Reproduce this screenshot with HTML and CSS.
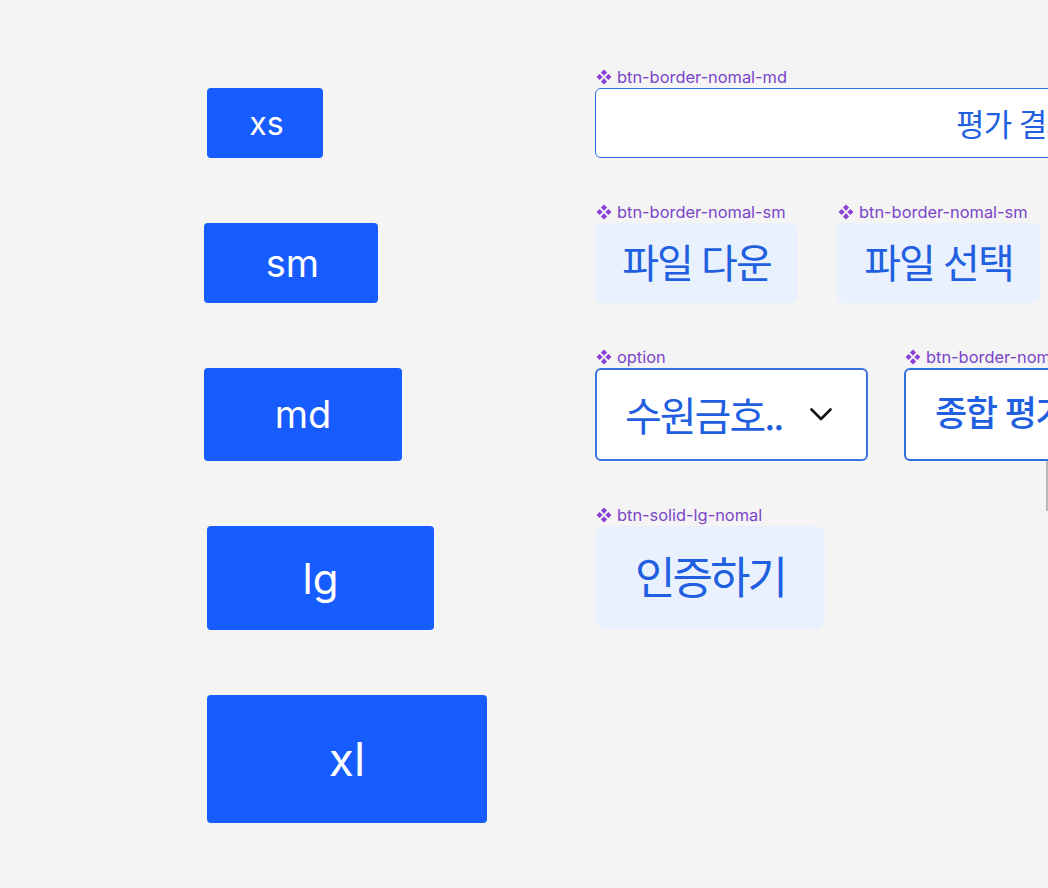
FILE: index.html
```html
<!DOCTYPE html>
<html lang="ko">
<head>
<meta charset="utf-8">
<link rel="stylesheet" href="styles.css">
</head>
<body>
<div class="canvas">
  <div class="board">
    <!-- row 1 -->
    <div class="cell-left"><div class="btn-solid size-xs shift">xs</div></div>
    <div class="cell-right">
      <div class="row">
        <div class="item">
          <div class="label"><svg class="comp" viewBox="0 0 12 12"><path d="M6 .4 8.3 2.7 6 5 3.7 2.7Z M2.7 3.7 5 6 2.7 8.3 .4 6Z M9.3 3.7 11.6 6 9.3 8.3 7 6Z M6 7 8.3 9.3 6 11.6 3.7 9.3Z"/></svg>btn-border-nomal-md</div>
          <div class="btn-border wide-md">평가 결과</div>
        </div>
      </div>
    </div>
    <!-- row 2 -->
    <div class="cell-left"><div class="btn-solid size-sm">sm</div></div>
    <div class="cell-right">
      <div class="row gap-sm">
        <div class="item">
          <div class="label"><svg class="comp" viewBox="0 0 12 12"><path d="M6 .4 8.3 2.7 6 5 3.7 2.7Z M2.7 3.7 5 6 2.7 8.3 .4 6Z M9.3 3.7 11.6 6 9.3 8.3 7 6Z M6 7 8.3 9.3 6 11.6 3.7 9.3Z"/></svg>btn-border-nomal-sm</div>
          <div class="btn-soft soft-sm">파일 다운</div>
        </div>
        <div class="item">
          <div class="label"><svg class="comp" viewBox="0 0 12 12"><path d="M6 .4 8.3 2.7 6 5 3.7 2.7Z M2.7 3.7 5 6 2.7 8.3 .4 6Z M9.3 3.7 11.6 6 9.3 8.3 7 6Z M6 7 8.3 9.3 6 11.6 3.7 9.3Z"/></svg>btn-border-nomal-sm</div>
          <div class="btn-soft soft-sm">파일 선택</div>
        </div>
      </div>
    </div>
    <!-- row 3 -->
    <div class="cell-left"><div class="btn-solid size-md">md</div></div>
    <div class="cell-right">
      <div class="row gap-md">
        <div class="item">
          <div class="label"><svg class="comp" viewBox="0 0 12 12"><path d="M6 .4 8.3 2.7 6 5 3.7 2.7Z M2.7 3.7 5 6 2.7 8.3 .4 6Z M9.3 3.7 11.6 6 9.3 8.3 7 6Z M6 7 8.3 9.3 6 11.6 3.7 9.3Z"/></svg>option</div>
          <div class="select">
            <span class="select-text">수원금호..</span>
            <svg class="chev" viewBox="0 0 22 13"><polyline points="1.5,1.5 11,11 20.5,1.5"/></svg>
          </div>
        </div>
        <div class="item">
          <div class="label"><svg class="comp" viewBox="0 0 12 12"><path d="M6 .4 8.3 2.7 6 5 3.7 2.7Z M2.7 3.7 5 6 2.7 8.3 .4 6Z M9.3 3.7 11.6 6 9.3 8.3 7 6Z M6 7 8.3 9.3 6 11.6 3.7 9.3Z"/></svg>btn-border-nomal-md</div>
          <div class="btn-border box-md">종합 평가 결과</div>
          <div class="guide"></div>
        </div>
      </div>
    </div>
    <!-- row 4 -->
    <div class="cell-left"><div class="btn-solid size-lg shift">lg</div></div>
    <div class="cell-right">
      <div class="row">
        <div class="item">
          <div class="label"><svg class="comp" viewBox="0 0 12 12"><path d="M6 .4 8.3 2.7 6 5 3.7 2.7Z M2.7 3.7 5 6 2.7 8.3 .4 6Z M9.3 3.7 11.6 6 9.3 8.3 7 6Z M6 7 8.3 9.3 6 11.6 3.7 9.3Z"/></svg>btn-solid-lg-nomal</div>
          <div class="btn-soft soft-lg">인증하기</div>
        </div>
      </div>
    </div>
    <!-- row 5 -->
    <div class="cell-left"><div class="btn-solid size-xl shift">xl</div></div>
    <div class="cell-right"></div>
  </div>
</div>
</body>
</html>
```

FILE: styles.css
```css
html, body {
  margin: 0;
  padding: 0;
  background: #f4f4f4;
  overflow: hidden;
  width: 1048px;
  height: 888px;
}

.canvas {
  padding: 67px 0 0 204px;
  font-family: Inter, "Noto Sans CJK KR", sans-serif;
}

.board {
  display: grid;
  grid-template-columns: 391px auto;
  row-gap: 44px;
  align-items: start;
}

.cell-left {
  padding-top: 21px;
}

.cell-right {
  min-width: 0;
}

.row {
  display: flex;
  align-items: flex-start;
}

.gap-sm { gap: 39px; }
.gap-md { gap: 36px; }

.item {
  display: flex;
  flex-direction: column;
  flex: none;
  position: relative;
}

.label {
  height: 21px;
  display: flex;
  align-items: center;
  gap: 5px;
  padding-left: 1px;
  font-family: Inter, sans-serif;
  font-size: 16.4px;
  color: #7a44c9;
  white-space: nowrap;
  line-height: 1;
  padding-bottom: 1px;
  box-sizing: border-box;
}

.comp {
  width: 16px;
  height: 16px;
  fill: #8a3fd6;
  flex: none;
}

/* solid blue buttons */
.btn-solid {
  background: #175cff;
  color: #ffffff;
  border-radius: 4px;
  display: flex;
  align-items: center;
  justify-content: center;
  font-family: Inter, sans-serif;
  box-sizing: border-box;
}

.shift { margin-left: 3px; }

.size-xs { width: 116px; height: 70px; font-size: 32px; padding-left: 3px; }
.size-sm { width: 174px; height: 80px; font-size: 38px; padding-left: 3px; }
.size-md { width: 198px; height: 93px; font-size: 38px; padding-bottom: 2px; }
.size-lg { width: 227px; height: 104px; font-size: 42px; }
.size-xl { width: 280px; height: 128px; font-size: 46px; }

/* border buttons */
.btn-border {
  background: #ffffff;
  border: 1.5px solid #2f6de0;
  border-radius: 6px;
  box-sizing: border-box;
  display: flex;
  align-items: center;
  color: #1f5fe0;
  font-family: "Noto Sans CJK KR", sans-serif;
  white-space: nowrap;
}

.wide-md {
  width: 840px;
  height: 70px;
  justify-content: center;
  font-size: 31px;
  letter-spacing: -1px;
  padding-bottom: 2px;
}

.box-md {
  width: 300px;
  height: 93px;
  padding-left: 29px;
  font-size: 35px;
  font-weight: 500;
  letter-spacing: -1.5px;
  border-width: 2px;
  padding-bottom: 8px;
}

.guide {
  position: absolute;
  left: 142px;
  top: 114px;
  width: 2px;
  height: 50px;
  background: #b8b8b8;
}

/* soft blue buttons */
.btn-soft {
  background: #e8f1fd;
  color: #1f5fe0;
  border-radius: 7px;
  display: flex;
  align-items: center;
  justify-content: center;
  font-family: "Noto Sans CJK KR", sans-serif;
  white-space: nowrap;
  box-sizing: border-box;
}

.soft-sm {
  width: 203px;
  height: 80px;
  font-size: 40px;
  letter-spacing: -2px;
  padding-bottom: 4px;
}

.soft-lg {
  width: 230px;
  height: 104px;
  font-size: 44px;
  letter-spacing: -3px;
  border-radius: 12px;
  padding-bottom: 6px;
}

/* select */
.select {
  width: 273px;
  height: 93px;
  background: #ffffff;
  border: 2px solid #3a72e2;
  border-radius: 6px;
  box-sizing: border-box;
  display: flex;
  align-items: center;
  padding: 0 34px 2px 28px;
  justify-content: space-between;
}

.select-text {
  color: #1f5fe0;
  font-family: "Noto Sans CJK KR", sans-serif;
  font-size: 40px;
  letter-spacing: -2px;
  white-space: nowrap;
}

.chev {
  width: 22px;
  height: 13px;
  fill: none;
  stroke: #111111;
  stroke-width: 2.6;
  stroke-linecap: round;
  stroke-linejoin: round;
  margin-top: 2px;
}
```
